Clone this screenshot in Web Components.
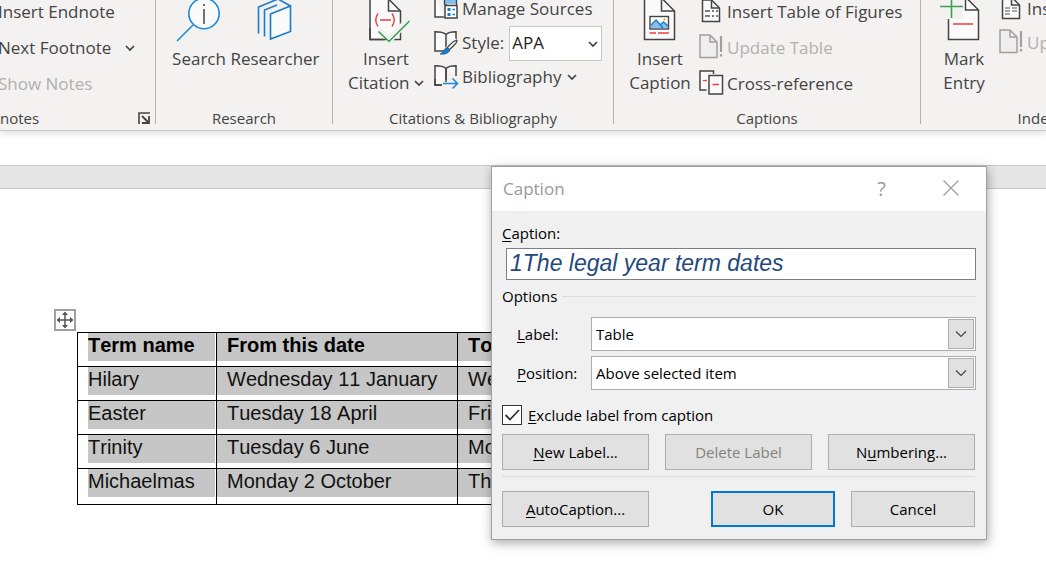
<!DOCTYPE html>
<html lang="en">
<head>
<meta charset="utf-8">
<title>Insert caption</title>
<style>
  html { height: 100%; background: #fff; }
  body { position: relative; box-sizing: border-box; min-height: 100%; margin: 0; overflow-x: clip; font-family: "Open Sans", "Noto Sans", sans-serif; color: #444; }
</style>
</head>
<body>
<word-ribbon></word-ribbon>
<document-view></document-view>
<caption-dialog></caption-dialog>

<script>
const page = (x, y, r, b, fold, fill = '#fafafa', stroke = '#444') =>
  `<path d="M${x} ${y}H${r - fold}L${r} ${y + fold}V${b}H${x}Z" fill="${fill}" stroke="${stroke}" stroke-width="1.5"/>
   <path d="M${r - fold} ${y}V${y + fold}H${r}" fill="none" stroke="${stroke}" stroke-width="1.5"/>`;
const book = `<path d="M12 3.5C10 1.5 7 .8 1 .8V20H10M12 3.5C14 1.5 17 .8 22 .8V11M12 3.5V19" fill="#fafafa" stroke="#444" stroke-width="1.5"/>`;

const ICONS = {
  search: [48, 42, `<path d="M18 25L2 41" stroke="#1e88d8" stroke-width="1.6"/><circle cx="29" cy="13.5" r="15.2" fill="#fafafa" stroke="#1e88d8" stroke-width="1.6"/><path d="M29 9V24" stroke="#444" stroke-width="1.5"/><circle cx="29" cy="5" r="1" fill="#444"/>`],
  researcher: [48, 42, `<g fill="none" stroke="#1a7cc9" stroke-width="1.6"><path d="M7.5 33.5V7L27 -1L39.5 6"/><path d="M13.5 36.5V10L26 5"/><path d="M19.5 14L39.5 6V31.5L19.5 39Z" fill="#fafafa"/></g>`],
  citation: [48, 42, page(8, -1, 38.5, 39.5, 12) + `<path d="M14 32L27 45L50 21L46 16L27 35L18 27Z" fill="#f3f2f1"/><path d="M8 28V39.500H24" fill="none" stroke="#444" stroke-width="1.5"/><path d="M16.5 31.5L27 41.5L47.5 21" fill="none" stroke="#38a152" stroke-width="1.6"/><path d="M16 13.5Q11.5 20 16 26.5M30 13.5Q34.5 20 30 26.5M18 20H29" fill="none" stroke="#e8403f" stroke-width="1.4"/>`],
  caption: [48, 42, page(8.5, -2, 38.5, 39.5, 13) + `<rect x="14" y="16.5" width="18.5" height="12.5" fill="#fff" stroke="#444" stroke-width="1.4"/><path d="M15 27V25L20 20L24 24L27.5 21L32 25V28H15Z" fill="#83beec"/><path d="M15 25L20 20L27 28M24 25L27.5 22L32 26" fill="none" stroke="#1a7cc9" stroke-width="1.3"/><circle cx="28.5" cy="19.5" r="1" fill="#e8912d"/><path d="M13.5 33H20M22 33H33" stroke="#e8403f" stroke-width="1.5"/>`],
  mark: [48, 42, page(8.5, -3, 38.5, 39.5, 13) + `<path d="M-1 -4H23V19H-1Z" fill="#f3f2f1"/><path d="M0 6.5H23M11.5 0V18" stroke="#38a152" stroke-width="1.6"/><path d="M13 24H33" stroke="#e8403f" stroke-width="1.5"/>`],
  sources: [24, 24, `<path d="M1 0V20H10M12 0V8" fill="#fafafa" stroke="#444" stroke-width="1.5"/><path d="M11 2H23V7H11Z" fill="#83beec"/><path d="M10.5 1V8M22.5 1V8" fill="none" stroke="#444" stroke-width="1.3"/><rect x="11" y="8.5" width="12" height="12.5" fill="#fff" stroke="#444" stroke-width="1.5"/><path d="M13.5 12.5H16.500M13.5 17.500H16.500" stroke="#1a7cc9" stroke-width="2.8"/><path d="M18.500 12.500H21M18.500 17.500H21" stroke="#1a7cc9" stroke-width="1.5"/>`],
  style: [24, 24, book + `<path d="M23.5 9.5L13 19" stroke="#f3f2f1" stroke-width="6"/><path d="M23 9.5Q24 11 15 19L13 17Q20 9 23 9.5Z" fill="#fafafa" stroke="#444" stroke-width="1.3"/><path d="M14 17L16 19Q14 24 6 23Q9 22 10 19Q11 17 14 17Z" fill="#1a7cc9" stroke="#145a98" stroke-width=".8"/>`],
  bibliography: [24, 24, book + `<path d="M8 15H24V24H8Z" fill="#f3f2f1"/><path d="M12 3.5V17M1 14V20H8" fill="none" stroke="#444" stroke-width="1.5"/><path d="M9 18.5H23M18.5 13.5L23.5 18.5L18.5 23.5" fill="none" stroke="#1e88d8" stroke-width="1.6"/>`],
  figures: [24, 24, page(3.5, 0, 20.5, 21.5, 8) + `<path d="M6 11H11M6 16H11M13 11H15M17 11H19M13 16H15M17 16H19" stroke="#555" stroke-width="1.3"/>`],
  index: [24, 24, page(3.5, 0, 20.5, 21.5, 8) + `<path d="M6 11H11M6 14H11M6 17H11M13 11H18M13 14H18" stroke="#555" stroke-width="1.2"/>`],
  update: [24, 24, page(1, -1, 18, 21.5, 7, '#eee', '#a0a0a0') + `<path d="M22 0V16M22 18V20.5" stroke="#a0a0a0" stroke-width="2.2"/>`],
  cross: [24, 24, `<path d="M7.5 18H1V-1H14.5V2" fill="#fafafa" stroke="#444" stroke-width="1.5"/><path d="M4 8.5H8" stroke="#e8403f" stroke-width="1.3"/><rect x="10" y="3.5" width="13.5" height="18.5" fill="#fafafa" stroke="#444" stroke-width="1.5"/><path d="M13.5 12.5H20" stroke="#e8403f" stroke-width="1.5"/>`],
  chevron: [10, 6, `<path d="M1 1L5 5L9 1" fill="none" stroke="#444" stroke-width="1.7"/>`],
  thinchevron: [12, 8, `<path d="M1 1.5L6 6.500L11 1.5" fill="none" stroke="#444" stroke-width="1.2"/>`],
  launcher: [12, 12, `<path d="M1 12V1H12" fill="none" stroke="#444" stroke-width="1.6"/><path d="M4 4L10 10M11 4V11H4" fill="none" stroke="#444" stroke-width="1.8"/>`],
  close: [16, 16, `<path d="M.5 .5L15.5 15.5M15.5 .5L.5 15.5" stroke="#999" stroke-width="1.1"/>`],
  check: [20, 20, `<path d="M3.5 10L8 14.5L17 5" fill="none" stroke="#333" stroke-width="1.8"/>`],
  move: [22, 22, `<rect x="1" y="1" width="20" height="20" fill="#fff" stroke="#a0a0a0" stroke-width="2"/><path d="M11 4V18M4 11H18" stroke="#555" stroke-width="1.5"/><path d="M11 2.5L14 6H8ZM11 19.5L14 16H8ZM2.5 11L6 8V14ZM19.5 11L16 8V14Z" fill="#555"/>`]
};

function define(name, template) {
  customElements.define(name, class extends HTMLElement {
    constructor() {
      super();
      this.attachShadow({ mode: 'open' });
    }
    connectedCallback() {
      this.shadowRoot.innerHTML = typeof template === 'function' ? template(this) : template;
    }
  });
}

define('ui-icon', el => {
  const [w, h, art] = ICONS[el.getAttribute('name')];
  return `<style>:host{display:inline-block;flex:none;line-height:0}svg{display:block;overflow:visible}</style>
    <svg width="${w}" height="${h}" viewBox="0 0 ${w} ${h}" aria-hidden="true">${art}</svg>`;
});

/* Large ribbon button: picture over one or two lines of text */
define('ribbon-tile', el => `<style>
  :host{display:block}
  button{display:flex;flex-direction:column;align-items:center;gap:5px;width:100%;padding:0;border:0;background:none;font:inherit;font-size:17px;line-height:24px;color:inherit;white-space:nowrap}
  ::slotted(ui-icon){vertical-align:3px}
  </style><button type="button"><ui-icon name="${el.getAttribute('icon')}"></ui-icon><span><slot></slot></span></button>`);

/* Small ribbon command: picture beside a text, optional drop-down arrow */
define('ribbon-command', el => `<style>
  :host{display:flex;height:var(--row,36px)}
  button{display:flex;align-items:center;gap:4px;padding:0;border:0;background:none;font:inherit;font-size:17px;line-height:24px;color:inherit;white-space:nowrap}
  button:disabled{color:#b1b0af}
  .arrow{margin-left:var(--arrow-gap,2px)}
  </style><button type="button" ${el.hasAttribute('disabled') ? 'disabled' : ''}>
  ${el.hasAttribute('icon') ? `<ui-icon name="${el.getAttribute('icon')}"></ui-icon>` : ''}<span><slot></slot></span>
  ${el.hasAttribute('menu') ? '<ui-icon class="arrow" name="chevron"></ui-icon>' : ''}</button>`);

define('ribbon-style-picker', `<style>
  :host{display:flex;align-items:center;gap:4px;height:var(--row,36px);font-size:17px;line-height:24px}
  .box{position:relative;margin-left:1px}
  select{appearance:none;display:block;box-sizing:border-box;width:93px;height:35px;padding:0 24px 0 2px;border:1px solid #c8c6c4;border-radius:0;background:#fff;font:inherit;color:#222}
  .box ui-icon{position:absolute;right:4px;top:15px;pointer-events:none}
  </style><ui-icon name="style"></ui-icon><label for="s">Style:</label>
  <span class="box"><select id="s"><option>APA</option></select><ui-icon name="chevron"></ui-icon></span>`);

define('ribbon-group', el => `<style>
  :host{display:flex;flex-direction:column;box-sizing:border-box;height:124px;border-right:1px solid #b3b1af}
  .content{flex:1;display:flex;min-height:0}
  footer{font-size:15px;line-height:20px;height:12px;display:flex;align-items:center;justify-content:var(--caption-align,center);white-space:nowrap}
  button{display:flex;margin:0 5px 0 auto;padding:0;border:0;background:none}
  </style><div class="content"><slot></slot></div>
  <footer><span>${el.getAttribute('caption')}</span>${el.hasAttribute('launcher') ? '<button type="button" aria-label="Footnote and Endnote settings"><ui-icon name="launcher"></ui-icon></button>' : ''}</footer>`);

define('word-ribbon', `<style>
  :host{display:block;position:relative;background:#f3f2f1;border-bottom:1px solid #c9c8c7;box-shadow:0 2px 7px rgba(0,0,0,.14)}
  nav{display:flex;height:130px;overflow:hidden}
  ribbon-group{flex:none}
  .notes{width:156px;--caption-align:flex-start}
  .research{width:177px}
  .citations{width:281px}
  .captions{width:307px}
  .index{width:233px}
  .rows{flex:none;margin-top:-6px}
  .tight{margin-top:-8px;--row:34px}
  .notes .rows{margin-left:-2px;--arrow-gap:10px}
  .research ribbon-tile:first-of-type{margin-left:15px;width:56px}
  .research ribbon-tile:last-of-type{margin-left:5px;width:86px}
  .citations ribbon-tile{margin-left:9px;width:88px}
  .citations .rows{margin-left:4px}
  .captions ribbon-tile{margin-left:12px;width:68px}
  .captions .rows{margin-left:5px}
  .index ribbon-tile{margin-left:15px;width:56px}
  .index .rows{margin-left:7px}
  </style><nav aria-label="References">
  <ribbon-group class="notes" caption="notes" launcher><div class="rows">
    <ribbon-command>Insert Endnote</ribbon-command>
    <ribbon-command menu>Next Footnote</ribbon-command>
    <ribbon-command disabled>Show Notes</ribbon-command></div></ribbon-group>
  <ribbon-group class="research" caption="Research">
    <ribbon-tile icon="search">Search</ribbon-tile>
    <ribbon-tile icon="researcher">Researcher</ribbon-tile></ribbon-group>
  <ribbon-group class="citations" caption="Citations &amp; Bibliography">
    <ribbon-tile icon="citation">Insert<br>Citation <ui-icon name="chevron"></ui-icon></ribbon-tile>
    <div class="rows tight">
      <ribbon-command icon="sources">Manage Sources</ribbon-command>
      <ribbon-style-picker></ribbon-style-picker>
      <ribbon-command icon="bibliography" menu>Bibliography</ribbon-command></div></ribbon-group>
  <ribbon-group class="captions" caption="Captions">
    <ribbon-tile icon="caption">Insert<br>Caption</ribbon-tile>
    <div class="rows">
      <ribbon-command icon="figures">Insert Table of Figures</ribbon-command>
      <ribbon-command icon="update" disabled>Update Table</ribbon-command>
      <ribbon-command icon="cross">Cross-reference</ribbon-command></div></ribbon-group>
  <ribbon-group class="index" caption="Index">
    <ribbon-tile icon="mark">Mark<br>Entry</ribbon-tile>
    <div class="rows tight">
      <ribbon-command icon="index">Insert Index</ribbon-command>
      <ribbon-command icon="update" disabled>Update Index</ribbon-command></div></ribbon-group>
  </nav>`);

define('term-table', `<style>
  :host{display:block;font:20px/25px "Liberation Sans",Arial,sans-serif;font-kerning:none;color:#111}
  table{border-collapse:collapse;table-layout:fixed;width:620px}
  .name{width:139px}.from{width:241px}
  th,td{border:1px solid #000;padding:0;height:33px;text-align:left;vertical-align:top}
  tr:last-child td{height:35px}
  th{color:#000}
  span{display:block;height:28px;padding-left:10px;background:#c6c6c6;white-space:nowrap}
  tr>:first-child{padding-left:10px}
  tr>:first-child span{padding-left:0;margin-right:1px}
  </style><table><colgroup><col class="name"><col class="from"><col></colgroup>
  <thead><tr><th><span>Term name</span></th><th><span>From this date</span></th><th><span>To</span></th></tr></thead>
  <tbody>
  <tr><td><span>Hilary</span></td><td><span>Wednesday 11 January</span></td><td><span>We</span></td></tr>
  <tr><td><span>Easter</span></td><td><span>Tuesday 18 April</span></td><td><span>Fri</span></td></tr>
  <tr><td><span>Trinity</span></td><td><span>Tuesday 6 June</span></td><td><span>Mo</span></td></tr>
  <tr><td><span>Michaelmas</span></td><td><span>Monday 2 October</span></td><td><span>Th</span></td></tr>
  </tbody></table>`);

define('document-view', `<style>
  :host{display:block;padding-top:34px}
  .gap{height:22px;background:#e6e6e6;border:solid #c6c6c6;border-width:1px 0}
  main{padding:120px 0 40px 54px}
  main>ui-icon{display:block}
  term-table{margin:1px 0 0 23px}
  </style><div class="gap"></div><main><ui-icon name="move"></ui-icon><term-table></term-table></main>`);

define('dialog-button', el => `<style>
  :host{display:block}
  button{box-sizing:border-box;width:100%;height:36px;padding:0;border:1px solid #adadad;border-radius:0;background:#e1e1e1;font:inherit;color:#000}
  button:disabled{color:#838383}
  button.default{border:2px solid #0078d7}
  ::slotted(u){text-underline-offset:2px}
  </style><button type="button" class="${el.hasAttribute('default') ? 'default' : ''}" ${el.hasAttribute('disabled') ? 'disabled' : ''}><slot></slot></button>`);

define('dialog-combo', el => `<style>
  :host{display:grid;grid-template-columns:74px 1fr;align-items:center}
  u{text-underline-offset:2px}
  .box{position:relative;display:block}
  select{appearance:none;display:block;box-sizing:border-box;width:100%;height:34px;padding:0 32px 0 4px;border:1px solid #abadb3;border-radius:0;background:#fff;font:inherit;color:#000}
  .drop{position:absolute;top:2px;right:2px;bottom:2px;width:26px;box-sizing:border-box;border:1px solid #adadad;background:#e1e1e1;display:flex;align-items:center;justify-content:center;pointer-events:none}
  </style><label for="c"><u>${el.getAttribute('label')[0]}</u>${el.getAttribute('label').slice(1)}</label>
  <span class="box"><select id="c"><option>${el.getAttribute('value')}</option></select><span class="drop"><ui-icon name="thinchevron"></ui-icon></span></span>`);

define('caption-dialog', `<style>
  :host{position:absolute;left:491px;top:166px;width:496px;box-sizing:border-box;border:1px solid #a0a0a0;background:#f0f0f0;box-shadow:1px 3px 10px rgba(0,0,0,.34);font-size:15px;line-height:20px;color:#000}
  header{display:flex;align-items:center;height:44px;padding:0 27px 0 11px;background:#fff;color:#999}
  h1{flex:1;margin:0;font-size:17px;font-weight:400}
  header button{padding:0;border:0;background:none;font:inherit;font-size:20px;color:#999}
  header button+button{margin-left:57px}
  form{padding:12px 10px 12px}
  u{text-underline-offset:2px}
  .title{display:block}
  .text{display:block;box-sizing:border-box;width:calc(100% - 4px);height:32px;margin:5px 0 0 4px;padding:0 3px 2px;border:1px solid #7a7f8a;border-radius:0;background:#fff;color:#1f497d;font:italic 23px "Liberation Sans",Arial,sans-serif}
  fieldset{margin:0;padding:0;border:0;min-width:0}
  .legend{display:flex;align-items:center;gap:5px;margin:6px 0 11px}
  .legend::after{content:"";flex:1;border-top:1px solid #dcdcdc}
  dialog-combo{margin:0 0 5px 15px}
  .check{display:flex;align-items:center;gap:6px;margin-top:15px}
  .tick{position:relative;width:20px;height:20px}
  .tick input{appearance:none;display:block;box-sizing:border-box;width:20px;height:20px;margin:0;border:1px solid #333;background:#fff}
  .tick ui-icon{position:absolute;inset:0;pointer-events:none}
  .trio{display:grid;grid-template-columns:repeat(3,1fr);gap:16px;margin:9px 1px 6px 0}
  .end{display:flex;gap:16px;padding-top:14px;border-top:1px solid #dcdcdc;margin-right:1px}
  .end dialog-button{width:124px}
  .end dialog-button:first-child{width:147px;margin-right:auto}
  </style>
  <header><h1>Caption</h1><button type="button">?</button><button type="button" aria-label="Close"><ui-icon name="close"></ui-icon></button></header>
  <form>
    <label class="title" for="t"><u>C</u>aption:</label>
    <input class="text" id="t" type="text" value="1The legal year term dates">
    <fieldset aria-labelledby="o"><div class="legend" id="o">Options</div>
      <dialog-combo label="Label:" value="Table"></dialog-combo>
      <dialog-combo label="Position:" value="Above selected item"></dialog-combo>
      <div class="check"><span class="tick"><input id="x" type="checkbox" checked><ui-icon name="check"></ui-icon></span><label for="x"><u>E</u>xclude label from caption</label></div>
      <div class="trio"><dialog-button><u>N</u>ew Label...</dialog-button><dialog-button disabled>Delete Label</dialog-button><dialog-button>N<u>u</u>mbering...</dialog-button></div>
    </fieldset>
    <div class="end"><dialog-button><u>A</u>utoCaption...</dialog-button><dialog-button default>OK</dialog-button><dialog-button>Cancel</dialog-button></div>
  </form>`);
</script>
</body>
</html>
